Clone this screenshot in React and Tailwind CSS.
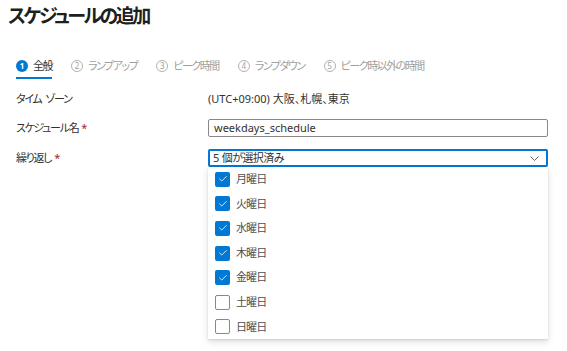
import { Check } from "lucide-react";

const steps = [
  { n: 1, label: "全般", active: true },
  { n: 2, label: "ランプアップ" },
  { n: 3, label: "ピーク時間" },
  { n: 4, label: "ランプダウン" },
  { n: 5, label: "ピーク時以外の時間" },
];

const days = [
  { name: "月曜日", checked: true },
  { name: "火曜日", checked: true },
  { name: "水曜日", checked: true },
  { name: "木曜日", checked: true },
  { name: "金曜日", checked: true },
  { name: "土曜日", checked: false },
  { name: "日曜日", checked: false },
];

function Required() {
  return <span className="ml-[3px] tracking-normal text-[#a4262c]">*</span>;
}

export default function App() {
  return (
    <div className="w-[567px] h-[351px] overflow-hidden bg-white text-[#323130] font-[Noto_Sans,Noto_Sans_CJK_JP,sans-serif] [font-feature-settings:'palt']">
      {/* ================= HEADER ================= */}
      <div className="pl-[8px] pt-[4px] text-[19px] leading-[24px] font-semibold tracking-[-0.13em] text-[#201f1e]">
        スケジュールの追加
      </div>

      {/* ================= STEPS ================= */}
      <div className="mt-[30px] pl-[16px] flex gap-[19px] text-[11px]">
        {steps.map((s) => (
          <div
            key={s.n}
            className={
              s.active
                ? "flex items-center gap-[5px] h-[21px] pb-[3px] border-b-2 border-[#0078d4] text-[#323130]"
                : "flex items-center gap-[5px] h-[21px] pb-[3px] border-b-2 border-transparent text-[#a19f9d]"
            }
          >
            <span
              className={
                s.active
                  ? "w-[12px] h-[12px] rounded-full bg-[#0078d4] text-white text-[8px] font-bold flex items-center justify-center leading-none"
                  : "w-[12px] h-[12px] rounded-full border border-[#b3b0ad] text-[#a19f9d] text-[8px] flex items-center justify-center leading-none"
              }
            >
              {s.n}
            </span>
            <span className="leading-[16px] tracking-[-0.135em]">{s.label}</span>
          </div>
        ))}
      </div>

      {/* ================= FORM ================= */}
      <div className="pl-[16px] pr-[19px] text-[11px]">
        <div className="mt-[11px] h-[18px] flex items-center">
          <div className="w-[192px] tracking-[-0.12em]">
            タイム<span className="ml-[4px]">ゾーン</span>
          </div>
          <div>(UTC+09:00) 大阪、札幌、東京</div>
        </div>

        <div className="mt-[11px] h-[18px] flex items-center">
          <div className="w-[192px] tracking-[-0.12em]">
            スケジュール名
            <Required />
          </div>
          <div className="flex-1 h-[18px] border border-[#8a8886] rounded-[2px] px-[5px] flex items-center">
            weekdays_schedule
          </div>
        </div>

        <div className="mt-[12px] h-[18px] flex items-center">
          <div className="w-[192px] tracking-[-0.12em]">
            繰り返し
            <Required />
          </div>
          <div className="relative flex-1">
            <div className="h-[18px] border-2 border-[#0078d4] rounded-[2px] pl-[3px] pr-[7px] flex items-center justify-between">
              <span className="tracking-[-0.05em]">
                5<span className="ml-[3px]">個が選択済み</span>
              </span>
              <svg width="9" height="5" viewBox="0 0 9 5" fill="none">
                <path d="M0.5 0.5 L4.5 4.5 L8.5 0.5" stroke="#605e5c" strokeWidth="1" />
              </svg>
            </div>

            {/* dropdown */}
            <div className="absolute left-0 right-0 top-full bg-white shadow-[0_3px_7px_rgba(0,0,0,0.13),0_0.6px_1.8px_rgba(0,0,0,0.11)]">
              {days.map((d) => (
                <div key={d.name} className="h-[24.6px] flex items-center pl-[7px] gap-[6px] text-[#505050]">
                  {d.checked ? (
                    <span className="w-[15px] h-[15px] rounded-[2px] bg-[#0078d4] flex items-center justify-center">
                      <Check size={10} strokeWidth={2} className="text-white" />
                    </span>
                  ) : (
                    <span className="w-[15px] h-[15px] rounded-[2px] border border-[#8a8886] bg-white" />
                  )}
                  <span className="tracking-[-0.08em]">{d.name}</span>
                </div>
              ))}
            </div>
          </div>
        </div>
      </div>
    </div>
  );
}
